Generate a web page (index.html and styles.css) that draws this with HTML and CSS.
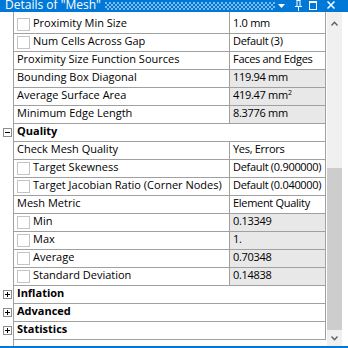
FILE: index.html
```html
<!DOCTYPE html>
<html>
<head>
<meta charset="utf-8">
<link rel="stylesheet" href="styles.css">
</head>
<body>
<div class="panel">
  <div class="titlebar">
    <span class="title">Details of "Mesh"</span>
    <span class="grip"></span>
    <span class="tb-icons">
      <svg class="ic-drop" width="7" height="4" viewBox="0 0 7 4"><polygon points="0,0 7,0 3.5,4" fill="#fff"/></svg>
      <svg class="ic-pin" width="7" height="11" viewBox="0 0 7 11"><path d="M1.5 0.5 H5.5 M2 0.5 V6 M5 0.5 V6 M0 6.5 H7 M3.5 7 V11" stroke="#fff" stroke-width="1" fill="none"/></svg>
      <svg class="ic-max" width="8" height="9" viewBox="0 0 8 9"><rect x="0.5" y="0.5" width="7" height="8" stroke="#fff" stroke-width="1" fill="none"/><rect x="0" y="0" width="8" height="2" fill="#fff"/></svg>
      <svg class="ic-close" width="8" height="8" viewBox="0 0 8 8"><path d="M0.5 0.5 L7.5 7.5 M7.5 0.5 L0.5 7.5" stroke="#fff" stroke-width="1.5" fill="none"/></svg>
    </span>
  </div>
  <div class="body">
    <div class="gridwrap">
      <div class="row first"><div class="gut"></div><div class="name"><span class="cb"></span>Proximity Min Size</div><div class="val">1.0 mm</div></div>
      <div class="row"><div class="gut"></div><div class="name"><span class="cb"></span>Num Cells Across Gap</div><div class="val">Default (3)</div></div>
      <div class="row"><div class="gut"></div><div class="name">Proximity Size Function Sources</div><div class="val">Faces and Edges</div></div>
      <div class="row"><div class="gut"></div><div class="name">Bounding Box Diagonal</div><div class="val ro">119.94 mm</div></div>
      <div class="row"><div class="gut"></div><div class="name">Average Surface Area</div><div class="val ro">419.47 mm<sup>2</sup></div></div>
      <div class="row"><div class="gut"></div><div class="name">Minimum Edge Length</div><div class="val ro">8.3776 mm</div></div>
      <div class="row cat"><div class="gut"><span class="exp minus"></span></div><div class="name wide">Quality</div></div>
      <div class="row"><div class="gut"></div><div class="name">Check Mesh Quality</div><div class="val">Yes, Errors</div></div>
      <div class="row"><div class="gut"></div><div class="name"><span class="cb"></span>Target Skewness</div><div class="val">Default (0.900000)</div></div>
      <div class="row"><div class="gut"></div><div class="name"><span class="cb"></span>Target Jacobian Ratio (Corner Nodes)</div><div class="val">Default (0.040000)</div></div>
      <div class="row"><div class="gut"></div><div class="name">Mesh Metric</div><div class="val">Element Quality</div></div>
      <div class="row"><div class="gut"></div><div class="name"><span class="cb"></span>Min</div><div class="val ro">0.13349</div></div>
      <div class="row"><div class="gut"></div><div class="name"><span class="cb"></span>Max</div><div class="val ro">1.</div></div>
      <div class="row"><div class="gut"></div><div class="name"><span class="cb"></span>Average</div><div class="val ro">0.70348</div></div>
      <div class="row"><div class="gut"></div><div class="name"><span class="cb"></span>Standard Deviation</div><div class="val ro">0.14838</div></div>
      <div class="row cat"><div class="gut"><span class="exp plus"></span></div><div class="name wide">Inflation</div></div>
      <div class="row cat"><div class="gut"><span class="exp plus"></span></div><div class="name wide">Advanced</div></div>
      <div class="row cat"><div class="gut"><span class="exp plus"></span></div><div class="name wide">Statistics</div></div>
      <div class="filler"></div>
    </div>
    <div class="scroll">
      <div class="sbtn up"><svg width="7" height="5" viewBox="0 0 7 5"><path d="M0.5 4.5 L3.5 1.2 L6.5 4.5" stroke="#606060" stroke-width="1.4" fill="none"/></svg></div>
      <div class="track"><div class="thumb"></div></div>
      <div class="sbtn down"><svg width="7" height="5" viewBox="0 0 7 5"><path d="M0.5 0.5 L3.5 3.8 L6.5 0.5" stroke="#606060" stroke-width="1.4" fill="none"/></svg></div>
    </div>
  </div>
  <div class="bottomline"></div>
</div>
</body>
</html>
```
FILE: styles.css
```css
html, body {
  margin: 0;
  padding: 0;
  background: #fff;
}
.panel {
  width: 348px;
  height: 348px;
  display: flex;
  flex-direction: column;
  font-family: "Open Sans", "Noto Sans", sans-serif;
  font-size: 11px;
  color: #000;
  overflow: hidden;
}
.titlebar {
  height: 12px;
  background: #0078d7;
  display: flex;
  align-items: flex-start;
  flex: none;
}
.title {
  color: #fff;
  font-size: 12px;
  line-height: 10px;
  padding-left: 5px;
  white-space: nowrap;
}
.grip {
  flex: 1;
  height: 8px;
  margin: 2px 3px 0 4px;
  background-image:
    radial-gradient(circle at 1px 1px, rgba(255,255,255,0.5) 0.7px, transparent 0.9px),
    radial-gradient(circle at 3px 3px, rgba(255,255,255,0.5) 0.7px, transparent 0.9px);
  background-size: 4px 4px;
}
.tb-icons {
  display: flex;
  align-items: flex-start;
  width: 70px;
  flex: none;
}
.ic-drop { margin-top: 4px; }
.ic-pin { margin-left: 10px; }
.ic-max { margin-top: 1px; margin-left: 7px; }
.ic-close { margin-top: 1px; margin-left: 10px; }

.body {
  flex: 1;
  display: flex;
  min-height: 0;
}
.gridwrap {
  width: 326px;
  display: flex;
  flex-direction: column;
  flex: none;
}
.row {
  display: grid;
  grid-template-columns: 13px 216px 97px;
  height: 18px;
  flex: none;
}
.row.first {
  height: 22px;
}
.gut {
  position: relative;
}
.name, .val {
  border-bottom: 1px solid #a0a0a0;
  border-left: 1px solid #a0a0a0;
  padding-left: 3px;
  line-height: 14px;
  white-space: nowrap;
  overflow: hidden;
}
.name {
  display: flex;
  align-items: flex-start;
}
.row.first .name, .row.first .val {
  padding-top: 4px;
}
.val {
  display: block;
  border-right: 1px solid #a0a0a0;
  letter-spacing: -0.3px;
}
.val.ro {
  background: #e8e8e8;
}
.name.wide {
  grid-column: 2 / 4;
  border-right: 1px solid #a0a0a0;
  font-weight: 700;
}
.cb {
  width: 13px;
  height: 13px;
  box-sizing: border-box;
  border: 1px solid #c4c4c4;
  background: #fff;
  margin-top: 2px;
  margin-right: 3px;
  flex: none;
}
sup {
  font-size: 7px;
  line-height: 0;
  vertical-align: 4px;
  letter-spacing: 0;
}
.exp {
  position: absolute;
  left: 3px;
  top: 4px;
  width: 9px;
  height: 9px;
  box-sizing: border-box;
  border: 1px solid #8c8c8c;
  background: #fff;
}
.exp::before {
  content: "";
  position: absolute;
  left: 1px;
  top: 3px;
  width: 5px;
  height: 1px;
  background: #000;
}
.exp.plus::after {
  content: "";
  position: absolute;
  left: 3px;
  top: 1px;
  width: 1px;
  height: 5px;
  background: #000;
}
.filler {
  flex: 1;
  margin-left: 13px;
  border-left: 1px solid #a0a0a0;
}
.scroll {
  width: 15px;
  margin-left: 1px;
  background: #f0f0f0;
  display: flex;
  flex-direction: column;
  flex: none;
}
.sbtn {
  display: flex;
  justify-content: center;
  align-items: center;
  flex: none;
}
.sbtn.up {
  height: 23px;
}
.sbtn.down {
  height: 16px;
}
.track {
  flex: 1;
  display: flex;
  flex-direction: column;
}
.thumb {
  margin-top: auto;
  height: 162px;
  background: #cdcdcd;
}
.bottomline {
  height: 2px;
  background: #0078d7;
  flex: none;
}
```
